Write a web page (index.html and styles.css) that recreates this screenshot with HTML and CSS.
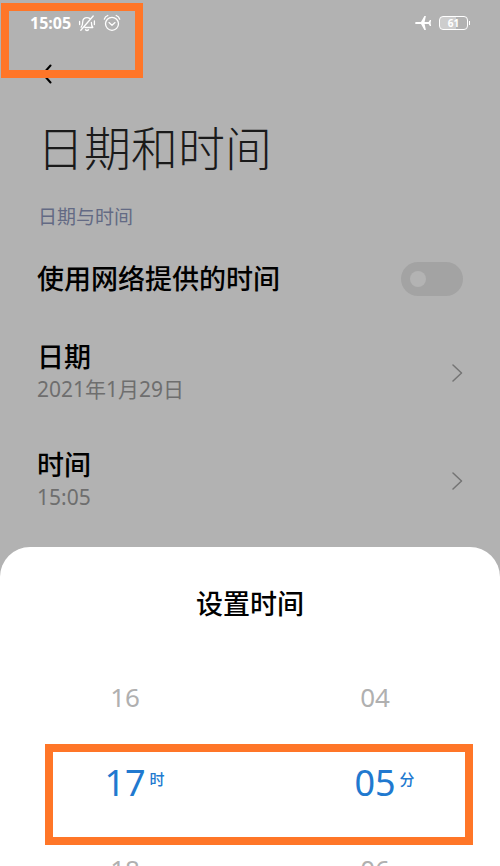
FILE: index.html
```
<!DOCTYPE html>
<html lang="zh-CN">
<head>
<meta charset="utf-8">
<meta name="viewport" content="width=device-width, initial-scale=1">
<title>日期和时间</title>
<link rel="stylesheet" href="styles.css">
</head>
<body>
<main class="settings">
  <div class="status-bar">
    <span class="clock">15:05</span>
    <svg class="status-icon" width="18" height="18" viewBox="0 0 18 18" aria-hidden="true">
      <path d="M7 13.500h7.800c-1.200-1.400-1.400-2.500-1.400-5M11.600 4.400C10.900 3.900 10 3.600 9 3.600 6.400 3.600 4.700 5.400 4.700 8c0 2.500-.2 3.600-1.500 5.200M7.500 15.800c.9.8 2.100.8 3 0M2.800 16.200 15.200 2M1.600 7.500v3M16.400 7v3.500"/>
    </svg>
    <svg class="status-icon" width="18" height="18" viewBox="0 0 18 18" aria-hidden="true">
      <circle cx="9" cy="9.800" r="6.500"/>
      <path d="M6 8.600l3 2.600 3-2.600M1.300 5.200C1.800 3.500 3 2.200 4.800 1.500M16.700 5.200C16.200 3.500 15 2.200 13.200 1.500"/>
    </svg>
    <span class="spacer"></span>
    <svg class="plane" width="18" height="16" viewBox="0 0 18 16" aria-hidden="true">
      <path d="M1 8c0-.7.8-1.100 1.800-1.100H7L10.400 1h1.500L10.600 6.900h4l1.300-2h1.200L16.600 8l.5 3.100h-1.200l-1.300-2h-4L11.900 15h-1.500L7 9.100H2.800C1.800 9.100 1 8.700 1 8z"/>
    </svg>
    <span class="battery"><span class="battery-level">61</span></span>
  </div>
  <nav class="app-bar">
    <button class="back" type="button" aria-label="返回">
      <svg width="10" height="20" viewBox="0 0 10 20" aria-hidden="true"><path d="M8.500 1.500 1 10l7.500 8.500"/></svg>
    </button>
  </nav>
  <h1 class="title">日期和时间</h1>
  <h2 class="section">日期与时间</h2>
  <label class="row row-toggle">
    <span class="row-title">使用网络提供的时间</span>
    <input class="toggle" type="checkbox">
  </label>
  <button class="row" type="button">
    <span class="row-text"><span class="row-title">日期</span><span class="row-value">2021年1月29日</span></span>
    <svg class="chevron" width="12" height="18" viewBox="0 0 12 18" aria-hidden="true"><path d="M2 1l8.500 8L2 17"/></svg>
  </button>
  <button class="row" type="button">
    <span class="row-text"><span class="row-title">时间</span><span class="row-value">15:05</span></span>
    <svg class="chevron" width="12" height="18" viewBox="0 0 12 18" aria-hidden="true"><path d="M2 1l8.500 8L2 17"/></svg>
  </button>
  <div class="status-frame"></div>
</main>
<section class="sheet" role="dialog" aria-labelledby="sheet-title">
  <h2 class="sheet-title" id="sheet-title">设置时间</h2>
  <div class="picker">
    <div class="picker-row"><button class="option" type="button">16</button><button class="option" type="button">04</button></div>
    <div class="picker-row selected">
      <button class="option" type="button"><span class="number">17</span><span class="unit">时</span></button>
      <button class="option" type="button"><span class="number">05</span><span class="unit">分</span></button>
      <div class="picker-frame"></div>
    </div>
    <div class="picker-row"><button class="option" type="button">18</button><button class="option" type="button">06</button></div>
  </div>
</section>
</body>
</html>
```
FILE: styles.css
```
* {
  box-sizing: border-box;
}

body {
  margin: 0;
  height: 100vh;
  overflow: hidden;
  display: flex;
  flex-direction: column;
  background: #b2b2b2;
  color: #000;
  font-family: "Noto Sans", "Noto Sans CJK SC", sans-serif;
}

h1,
h2 {
  margin: 0;
}

button {
  border: 0;
  padding: 0;
  background: none;
  color: inherit;
  font: inherit;
  text-align: left;
}

svg {
  display: block;
  fill: none;
  stroke-linecap: round;
  stroke-linejoin: round;
}

.settings {
  position: relative;
  flex: none;
  display: flex;
  flex-direction: column;
  padding-bottom: 12px;
}

.status-bar {
  display: flex;
  align-items: center;
  gap: 7px;
  height: 46px;
  padding: 0 30px;
  color: #fff;
}

.clock {
  font-size: 16px;
  font-weight: 700;
  line-height: 20px;
}

.status-icon {
  stroke: #fff;
  stroke-width: 1.300;
}

.spacer {
  flex: 1;
}

.plane {
  fill: #fff;
}

.battery {
  position: relative;
  width: 29px;
  height: 14px;
  margin-right: 2px;
  border: 1px solid #fff;
  border-radius: 4px;
  background: linear-gradient(90deg, #cdcdcd 60%, transparent 60%);
}

.battery::after {
  content: "";
  position: absolute;
  left: 29px;
  top: 4px;
  width: 1px;
  height: 4px;
  background: #fff;
}

.battery-level {
  display: block;
  font-size: 10px;
  font-weight: 700;
  line-height: 12px;
  text-align: center;
}

.app-bar {
  display: flex;
  height: 56px;
  padding: 0 42px;
  align-items: center;
}

.back svg {
  stroke: #000;
  stroke-width: 2;
}

.title {
  padding: 0 37px;
  margin-top: 16px;
  font-size: 47px;
  font-weight: 300;
  line-height: 60px;
  color: #1a1a1a;
}

.section {
  margin: 25px 38px 8px;
  font-size: 19px;
  font-weight: 400;
  line-height: 28px;
  color: #636a84;
}

.row {
  display: flex;
  align-items: center;
  justify-content: space-between;
  height: 108px;
  padding: 0 37px;
}

.row-toggle {
  height: 80px;
}

.row-text {
  display: flex;
  flex-direction: column;
}

.row-title {
  font-size: 27px;
  font-weight: 500;
  line-height: 32px;
}

.row-value {
  font-size: 21px;
  font-weight: 400;
  line-height: 32px;
  color: #6e6e6e;
}

.toggle {
  appearance: none;
  width: 62px;
  height: 34px;
  margin: 0;
  padding: 9px;
  border-radius: 17px;
  background: #a3a3a3;
}

.toggle::before {
  content: "";
  display: block;
  width: 16px;
  height: 16px;
  border-radius: 50%;
  background: #b3b3b3;
}

.chevron {
  stroke: #747474;
  stroke-width: 1.500;
}

.sheet {
  flex: 1 1 0;
  min-height: 0;
  overflow: hidden;
  border-radius: 30px 30px 0 0;
  background: #fff;
}

.sheet-title {
  padding: 37px 0 30px;
  font-size: 27px;
  font-weight: 500;
  line-height: 40px;
  text-align: center;
}

.picker-row {
  position: relative;
  display: grid;
  grid-template-columns: 1fr 1fr;
  height: 86px;
}

.option {
  font-size: 26px;
  font-weight: 400;
  line-height: 40px;
  text-align: center;
  color: #b0b0b0;
}

.selected .option {
  display: grid;
  grid-template-columns: 1fr auto 1fr;
  align-items: center;
  column-gap: 4px;
  color: #2179cf;
}

.number {
  grid-column: 2;
  font-size: 36px;
  font-weight: 400;
}

.unit {
  font-size: 15px;
  font-weight: 500;
  line-height: 20px;
  padding-bottom: 8px;
  text-align: left;
}

.status-frame,
.picker-frame {
  position: absolute;
  border: 8px solid #ff7628;
  pointer-events: none;
}

.status-frame {
  left: 1px;
  top: 3px;
  width: 142px;
  height: 75px;
}

.picker-frame {
  left: 45px;
  right: 27px;
  top: 4px;
  bottom: -19px;
}
```
